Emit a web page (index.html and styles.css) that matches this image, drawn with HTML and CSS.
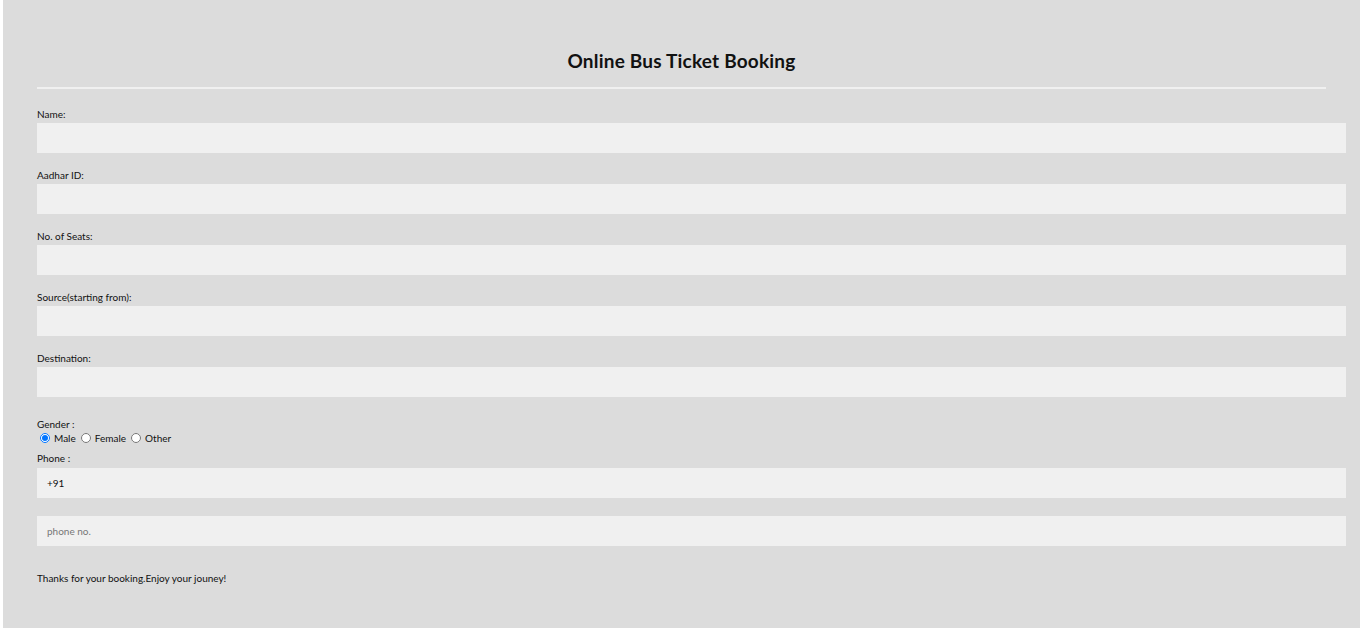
FILE: index.html
```html
<!DOCTYPE html>
<html>
<head>
<meta charset="utf-8">
<title>Online Bus Ticket Booking</title>
<link rel="stylesheet" href="styles.css">
</head>
<body>
<div class="page">
  <header class="head">
    <h1 class="title">Online Bus Ticket Booking</h1>
    <hr class="rule">
  </header>
  <form class="form">
    <div class="field">
      <label class="label">Name:</label>
      <input class="input" type="text">
    </div>
    <div class="field">
      <label class="label">Aadhar ID:</label>
      <input class="input" type="text">
    </div>
    <div class="field">
      <label class="label">No. of Seats:</label>
      <input class="input" type="text">
    </div>
    <div class="field">
      <label class="label">Source(starting from):</label>
      <input class="input" type="text">
    </div>
    <div class="field">
      <label class="label">Destination:</label>
      <input class="input" type="text">
    </div>
    <div class="gender">
      <div class="label">Gender :</div>
      <div class="radios">
        <label class="radio"><input type="radio" name="g" checked> Male</label>
        <label class="radio"><input type="radio" name="g"> Female</label>
        <label class="radio"><input type="radio" name="g"> Other</label>
      </div>
    </div>
    <div class="phone">
      <label class="label">Phone :</label>
      <input class="input input-phone" type="text" value="+91">
      <input class="input input-gap" type="text" placeholder="phone no.">
    </div>
    <p class="thanks">Thanks for your booking.Enjoy your jouney!</p>
  </form>
</div>
</body>
</html>
```
FILE: styles.css
```css
html, body {
  margin: 0;
  padding: 0;
  background: #ffffff;
}
body {
  font-family: "Lato", "Open Sans", sans-serif;
  color: #111;
}
.page {
  margin: 0 3px 0 3px;
  background: #dcdcdc;
  padding: 48px 34px 40px 34px;
  min-height: 628px;
  box-sizing: border-box;
}
.head {
  text-align: center;
}
.title {
  margin: 0;
  font-size: 19px;
  line-height: 26px;
  font-weight: 700;
  color: #111;
  letter-spacing: 0.2px;
}
.rule {
  margin: 13px 0 0 0;
  border: 0;
  height: 2px;
  background: #f0f0f0;
}
.form {
  margin-right: -20px;
  padding-top: 18px;
}
.field {
  margin-bottom: 15px;
}
.label {
  display: block;
  font-size: 10px;
  line-height: 14px;
  color: #111;
}
.input {
  display: block;
  box-sizing: border-box;
  width: 100%;
  height: 30px;
  margin: 2px 0 0 0;
  padding: 0 10px;
  border: 0;
  background: #f0f0f0;
  font-family: "Lato", "Open Sans", sans-serif;
  font-size: 10px;
  color: #111;
}
.input::placeholder {
  color: #777;
}
.input-phone {
  margin-top: 3px;
}
.input-gap {
  margin-top: 18px;
}
.gender {
  margin-top: 20px;
}
.radios {
  display: flex;
  align-items: center;
  font-size: 10px;
  line-height: 14px;
}
.radio {
  display: flex;
  align-items: center;
  margin-right: 2px;
}
.radio input {
  width: 10px;
  height: 10px;
  margin: 0 4px 0 3px;
}
.phone {
  margin-top: 6px;
}
.thanks {
  margin: 25px 0 0 0;
  font-size: 10px;
  line-height: 14px;
}
```
